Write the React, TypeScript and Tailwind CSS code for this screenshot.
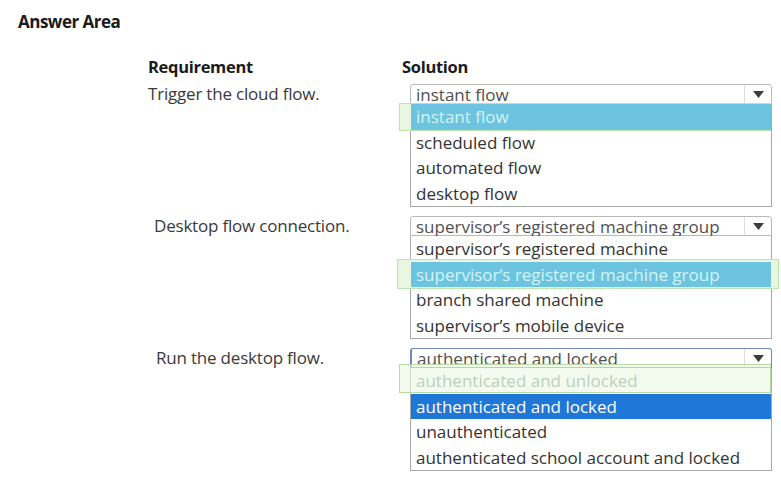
type Opt = {
  text: string;
  tone?: "cyan" | "blue" | "plain";
  mark?: "under" | "wide" | "over";
};

const rows: { label: string; labelPad: string; value: string; focus?: boolean; options: Opt[] }[] = [
  {
    label: "Trigger the cloud flow.",
    labelPad: "pl-0",
    value: "instant flow",
    options: [
      { text: "instant flow", tone: "cyan", mark: "under" },
      { text: "scheduled flow" },
      { text: "automated flow" },
      { text: "desktop flow" },
    ],
  },
  {
    label: "Desktop flow connection.",
    labelPad: "pl-[6px]",
    value: "supervisor\u2019s registered machine group",
    options: [
      { text: "supervisor\u2019s registered machine" },
      { text: "supervisor\u2019s registered machine group", tone: "cyan", mark: "wide" },
      { text: "branch shared machine" },
      { text: "supervisor\u2019s mobile device" },
    ],
  },
  {
    label: "Run the desktop flow.",
    labelPad: "pl-[8px]",
    value: "authenticated and locked",
    focus: true,
    options: [
      { text: "authenticated and unlocked", mark: "over" },
      { text: "authenticated and locked", tone: "blue" },
      { text: "unauthenticated" },
      { text: "authenticated school account and locked" },
    ],
  },
];

function Option({ opt }: { opt: Opt }) {
  const tone =
    opt.tone === "cyan"
      ? "bg-[#6dc4e1] text-[#d2f4f6]"
      : opt.tone === "blue"
        ? "bg-[#1f77d7] text-white"
        : opt.mark === "over"
          ? "text-[#7f8f7f]"
          : "text-[#333]";
  return (
    <div className="relative h-[25.5px]">
      {opt.mark === "under" && (
        <div className="absolute -left-[12px] right-0 -top-[1px] -bottom-[1px] border border-[#bfe3ae] bg-[#e8f8e0]" />
      )}
      {opt.mark === "wide" && (
        <div className="absolute -left-[14px] -right-[8px] -top-[3px] -bottom-[2px] border border-[#bfe3ae] bg-[#e8f8e0]" />
      )}
      <div className={`relative z-10 flex h-full items-center px-[5px] leading-none ${tone}`}>
        {opt.text}
      </div>
      {opt.mark === "over" && (
        <div className="absolute -left-[12px] right-0 -top-[4px] bottom-[1px] z-20 border border-[#b7dca6] bg-[#e9f9e2]/60" />
      )}
    </div>
  );
}

function Dropdown({ value, focus, options }: { value: string; focus?: boolean; options: Opt[] }) {
  return (
    <div className="w-[362px]">
      <div
        className={`relative flex h-[20px] rounded-t-[3px] border ${
          focus ? "border-[#6f86b8] border-l-[2px]" : "border-[#b9b9b9]"
        } bg-white`}
      >
        <div className="flex-1 whitespace-nowrap px-[5px] text-[#505050] leading-[18px] translate-y-[1px]">
          {value}
        </div>
        <div className="flex h-full w-[27px] items-center justify-center border-l border-[#dcdcdc]">
          <svg width="11" height="7" viewBox="0 0 11 7">
            <path d="M0 0h11L5.5 7z" fill="#3c3c3c" />
          </svg>
        </div>
      </div>
      <div className="relative border border-t-0 border-[#a9a9a9] bg-white">
        {options.map((o) => (
          <Option key={o.text} opt={o} />
        ))}
      </div>
    </div>
  );
}

export default function App() {
  return (
    <div
      className="h-[502px] w-[781px] overflow-hidden bg-white text-[17px] text-[#333]"
      style={{ fontFamily: '"Open Sans", "Noto Sans", sans-serif' }}
    >
      <div className="pl-[18px] pt-[10px] text-[17px] font-bold tracking-[-0.5px] text-[#1a1a1a] leading-[24px]">
        Answer Area
      </div>

      <div className="ml-[148px] mt-[22px]">
        <div className="flex text-[16.5px] font-bold leading-[22px] tracking-[-0.3px] text-[#1a1a1a]">
          <div className="w-[254px]">Requirement</div>
          <div>Solution</div>
        </div>

        <div className="mt-[6px] flex flex-col gap-[9px]">
          {rows.map((r) => (
            <div key={r.label} className="flex">
              <div className={`w-[262px] leading-[20px] tracking-[-0.2px] text-[#3a3a3a] ${r.labelPad}`}>
                {r.label}
              </div>
              <Dropdown value={r.value} focus={r.focus} options={r.options} />
            </div>
          ))}
        </div>
      </div>
    </div>
  );
}
